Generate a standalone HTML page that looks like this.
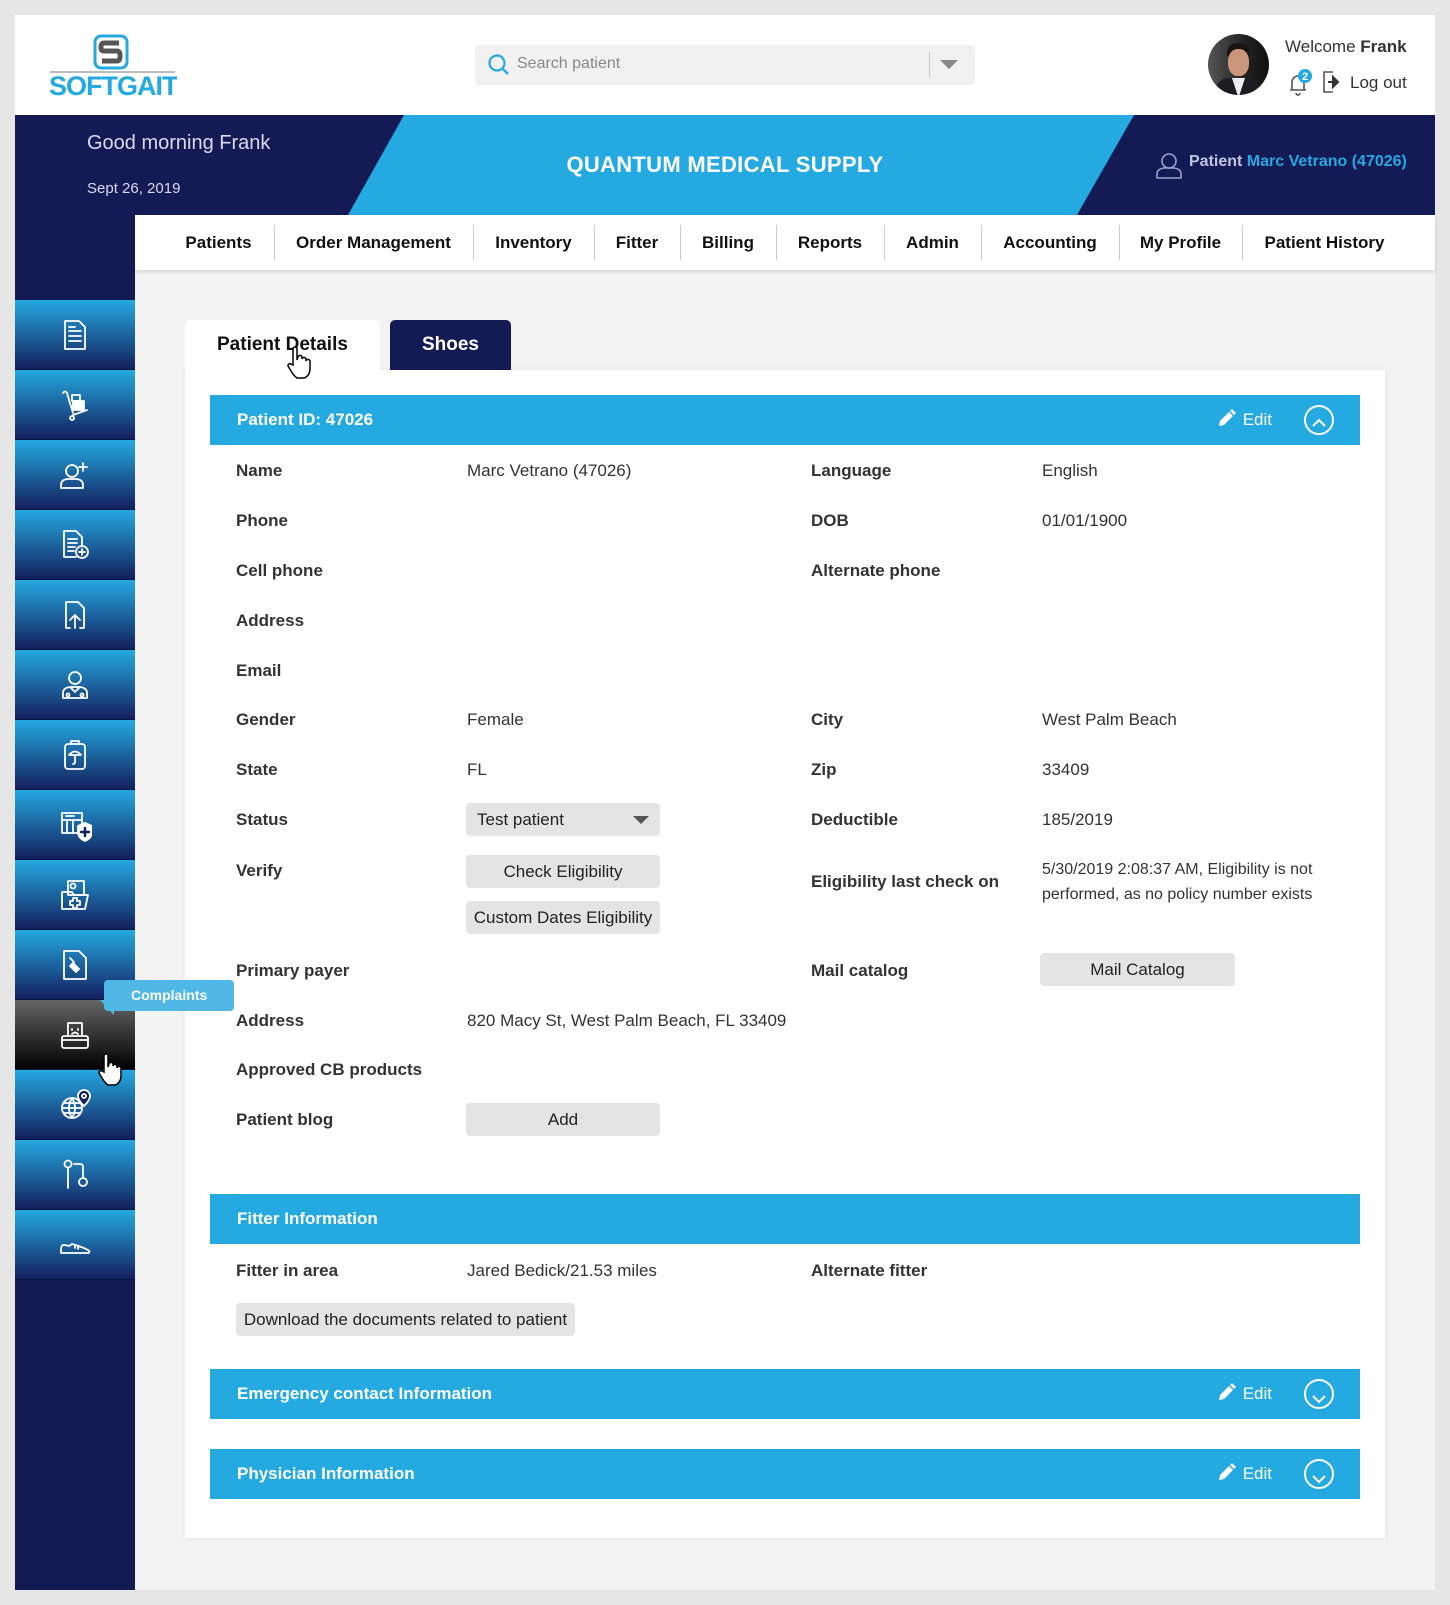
<!DOCTYPE html>
<html><head><meta charset="utf-8"><style>
*{box-sizing:border-box;margin:0;padding:0}
body{width:1450px;height:1605px;background:#e6e6e6;font-family:"Liberation Sans",Arial,sans-serif;position:relative;overflow:hidden;color:#333}
.abs{position:absolute}
#frame{left:15px;top:15px;width:1420px;height:1575px;background:#f3f3f3}
#hdr{left:15px;top:15px;width:1420px;height:100px;background:#fff}
#banner{left:15px;top:115px;width:1420px;height:100px;background:#131a54;overflow:hidden}
#nav{left:135px;top:215px;width:1300px;height:55px;background:#fff;box-shadow:0 2px 4px rgba(0,0,0,.12)}
.nv{position:absolute;top:0;height:55px;line-height:55px;font-weight:bold;font-size:17px;color:#111;text-align:center}
.sep{position:absolute;top:10px;width:1px;height:35px;background:#ccc}
#side{left:15px;top:215px;width:120px;height:1375px;background:#131a54}
.si{position:absolute;left:0;width:120px;height:70px;background:linear-gradient(#25a9e0,#14205e);border-bottom:1px solid #0d1440;display:flex;align-items:center;justify-content:center}
.si svg{width:34px;height:34px;fill:none;stroke:#fff;stroke-width:1.8;stroke-linecap:round;stroke-linejoin:round}
#card{left:185px;top:370px;width:1200px;height:1168px;background:#fff;box-shadow:0 0 6px rgba(0,0,0,.06)}
.bar{position:absolute;left:210px;width:1150px;height:50px;background:#24a9e1;color:#fff;font-weight:bold;font-size:17px;line-height:50px;padding-left:27px}
.lb{position:absolute;font-weight:bold;font-size:17px;color:#333;transform:translateY(-50%)}
.vl{position:absolute;font-size:17px;color:#333;transform:translateY(-50%)}
.btn{position:absolute;background:#e4e4e4;border-radius:4px;font-size:17px;color:#222;text-align:center}
.edit{position:absolute;right:88px;top:0;font-weight:normal;font-size:17px}
.circ{position:absolute;right:26px;top:10px;width:30px;height:30px;border:2px solid #fff;border-radius:50%}
</style></head><body>
<div class="abs" id="frame"></div>
<div class="abs" id="hdr"></div>
<!-- logo -->
<svg class="abs" style="left:49px;top:34px" width="128" height="62" viewBox="0 0 128 62">
<rect x="46" y="2" width="32" height="32" rx="6" fill="none" stroke="#24a9e1" stroke-width="3"/>
<path d="M70 9H55q-3 0-3 4v1q0 3 3 3h13q3 0 3 4v2q0 4-3 4H53" fill="none" stroke="#555" stroke-width="5"/>
<line x1="1" y1="38" x2="126" y2="38" stroke="#777" stroke-width="1"/>
<text x="0" y="61" font-family="Liberation Sans" font-weight="bold" font-size="27" fill="#24a9e1" letter-spacing="-1">S<tspan fill="#24a9e1">O</tspan>FTGAIT</text>
</svg>
<!-- search -->
<div class="abs" style="left:475px;top:45px;width:500px;height:40px;background:#f1f1f1;border-radius:4px"></div>
<svg class="abs" style="left:488px;top:54px" width="22" height="22" viewBox="0 0 22 22"><circle cx="9" cy="9" r="7.5" fill="none" stroke="#24a9e1" stroke-width="2.2"/><line x1="14.5" y1="14.5" x2="20" y2="20" stroke="#24a9e1" stroke-width="2.5"/></svg>
<div class="abs" style="left:517px;top:55px;font-size:16px;color:#888">Search patient</div>
<div class="abs" style="left:929px;top:52px;width:1px;height:26px;background:#ccc"></div>
<div class="abs" style="left:940px;top:60px;border-left:9px solid transparent;border-right:9px solid transparent;border-top:9px solid #888"></div>
<!-- avatar -->
<div class="abs" style="left:1208px;top:34px;width:61px;height:61px;border-radius:50%;overflow:hidden;background:linear-gradient(90deg,#555,#222 60%,#111)">
<div class="abs" style="left:19px;top:9px;width:23px;height:14px;border-radius:10px 10px 3px 3px;background:#1a1410"></div>
<div class="abs" style="left:20px;top:15px;width:21px;height:27px;border-radius:45%;background:#c9967c"></div>
<div class="abs" style="left:8px;top:44px;width:45px;height:25px;border-radius:12px 12px 0 0;background:#1c1c22"></div>
<div class="abs" style="left:24px;top:44px;width:13px;height:20px;background:#eee;clip-path:polygon(0 0,100% 0,50% 100%)"></div>
</div>
<div class="abs" style="left:1285px;top:37px;font-size:17px;color:#333">Welcome <b>Frank</b></div>
<svg class="abs" style="left:1284px;top:68px" width="30" height="30" viewBox="0 0 30 30"><path d="M6 22h16M8 22V14a6 6 0 0 1 12 0v8M12 25a2 2 0 0 0 4 0" fill="none" stroke="#555" stroke-width="1.6"/><circle cx="21" cy="8" r="7" fill="#24a9e1"/><text x="21" y="12" fill="#fff" font-size="11" font-weight="bold" text-anchor="middle" font-family="Liberation Sans">2</text></svg>
<svg class="abs" style="left:1323px;top:71px" width="20" height="22" viewBox="0 0 20 22"><path d="M10 1H1v20h9" fill="none" stroke="#555" stroke-width="1.6"/><path d="M5 11h8M10 6l5 5-5 5z" fill="#333" stroke="#333" stroke-width="2"/></svg>
<div class="abs" style="left:1350px;top:73px;font-size:17px;color:#333">Log out</div>
<!-- banner -->
<div class="abs" id="banner">
<div class="abs" style="left:0;top:0;width:1420px;height:100px;background:#24a9e1;clip-path:polygon(389px 0,1119px 0,1062px 100px,333px 100px)"></div>
<div class="abs" style="left:72px;top:17px;color:#d8dcf0;font-size:20px">Good morning Frank</div>
<div class="abs" style="left:72px;top:65px;color:#d8dcf0;font-size:15px">Sept 26, 2019</div>
<div class="abs" style="left:340px;top:37px;width:740px;text-align:center;color:#fff;font-weight:bold;font-size:22px;letter-spacing:.3px">QUANTUM MEDICAL SUPPLY</div>
<svg class="abs" style="left:1140px;top:36px" width="28" height="28" viewBox="0 0 28 28"><circle cx="14" cy="10" r="7" fill="none" stroke="#9aa3c8" stroke-width="1.6"/><path d="M2 27v-4q0-5 7-6h10q7 1 7 6v4z" fill="none" stroke="#9aa3c8" stroke-width="1.6"/></svg>
<div class="abs" style="left:1174px;top:38px;font-weight:bold;font-size:16px;color:#c0c6e0">Patient <span style="color:#24a9e1">Marc Vetrano (47026)</span></div>
</div>
<!-- nav -->
<div class="abs" id="nav">
<div class="nv" style="left:28px;width:111px">Patients</div><div class="sep" style="left:139px"></div>
<div class="nv" style="left:139px;width:199px">Order Management</div><div class="sep" style="left:338px"></div>
<div class="nv" style="left:338px;width:121px">Inventory</div><div class="sep" style="left:459px"></div>
<div class="nv" style="left:459px;width:86px">Fitter</div><div class="sep" style="left:545px"></div>
<div class="nv" style="left:545px;width:96px">Billing</div><div class="sep" style="left:641px"></div>
<div class="nv" style="left:641px;width:108px">Reports</div><div class="sep" style="left:749px"></div>
<div class="nv" style="left:749px;width:97px">Admin</div><div class="sep" style="left:846px"></div>
<div class="nv" style="left:846px;width:138px">Accounting</div><div class="sep" style="left:984px"></div>
<div class="nv" style="left:984px;width:123px">My Profile</div><div class="sep" style="left:1107px"></div>
<div class="nv" style="left:1107px;width:165px">Patient History</div>
</div>
<!-- sidebar -->
<div class="abs" id="side">
<div class="si" style="top:85px"><svg viewBox="0 0 34 34"><path d="M7 3h14l6 6v22H7z M11 13h12M11 18h12M11 23h12M11 9h6"/></svg></div>
<div class="si" style="top:155px"><svg viewBox="0 0 34 34"><path d="M5 5q2-3 4 0l6 20M14 28a2 2 0 1 0 .1 0M15 27l14-5"/><rect x="15" y="13" width="11" height="9" fill="#fff"/><rect x="14" y="7" width="8" height="6"/></svg></div>
<div class="si" style="top:225px"><svg viewBox="0 0 34 34"><circle cx="14" cy="13" r="6"/><path d="M3 30v-3q0-5 6-6h10q6 1 6 6v3zM25 5v8M21 9h8"/></svg></div>
<div class="si" style="top:295px"><svg viewBox="0 0 34 34"><path d="M6 3h12l6 6v8M6 3v26h12M10 11h9M10 15h9M10 19h7M10 23h6"/><circle cx="24" cy="24" r="6"/><path d="M24 21v6M21 24h6"/></svg></div>
<div class="si" style="top:365px"><svg viewBox="0 0 34 34"><path d="M12 30H8V4h12l6 6v20h-4M17 30V17M12 22l5-5 5 5"/></svg></div>
<div class="si" style="top:435px"><svg viewBox="0 0 34 34"><circle cx="17" cy="10" r="6"/><path d="M5 30v-5q0-5 7-6h10q7 1 7 6v5zM12 19l5 5 5-5"/><circle cx="10" cy="27" r="1.5"/><circle cx="24" cy="27" r="1.5"/></svg></div>
<div class="si" style="top:505px"><svg viewBox="0 0 34 34"><rect x="7" y="6" width="20" height="25" rx="3"/><path d="M13 6V3h8v3M11 17q6-7 12 0zM17 17v7q0 2-2 2"/></svg></div>
<div class="si" style="top:575px"><svg viewBox="0 0 34 34"><rect x="4" y="5" width="20" height="20"/><path d="M4 12h20M9 12v13M15 12v13M8 8h8"/><path d="M20 18l7-3 7 3v6q0 6-7 9-7-3-7-9z" fill="#fff"/><path d="M27 20v8M23 24h8" stroke="#14205e" stroke-width="2.5"/></svg></div>
<div class="si" style="top:645px"><svg viewBox="0 0 34 34"><rect x="10" y="3" width="16" height="14"/><circle cx="15" cy="8" r="2.5"/><path d="M4 14h10l2 3h14l-3 14H4zM15 20h4v3h3v4h-3v3h-4v-3h-3v-4h3z"/></svg></div>
<div class="si" style="top:715px"><svg viewBox="0 0 34 34"><path d="M6 3h15l7 7v21H6z"/><path d="M12 10l4 4M15 15l6 6-3 3-6-6z" fill="#fff"/></svg></div>
<div class="si" style="top:785px;background:linear-gradient(#666,#000)"><svg viewBox="0 0 34 34"><rect x="4" y="18" width="26" height="12" rx="2"/><path d="M4 22h26M10 18V5h14v13M14 11v1M20 11v1M14 16q3-3 6 0"/></svg></div>
<div class="si" style="top:855px"><svg viewBox="0 0 34 34"><circle cx="14" cy="20" r="10"/><path d="M4 20h20M14 10q-6 10 0 20q6-10 0-20M6 15h16M6 25h16"/><path d="M26 18q-6-6-6-10a6 6 0 0 1 12 0q0 4-6 10z" fill="#14205e"/><circle cx="26" cy="8" r="2"/></svg></div>
<div class="si" style="top:925px"><svg viewBox="0 0 34 34"><circle cx="10" cy="6" r="3.5"/><path d="M10 10v20M16 6h6q3 0 3 3v10"/><circle cx="25" cy="24" r="4"/></svg></div>
<div class="si" style="top:995px"><svg viewBox="0 0 34 34"><path d="M3 22q0-6 4-5l4 1 3-2q8 2 16 6 2 1 1 3H3zM3 25h28M17 17v3M20 18v3"/></svg></div>
</div>
<!-- card & tabs -->
<div class="abs" id="card"></div>
<!-- tooltip -->
<div class="abs" style="left:104px;top:980px;width:130px;height:31px;background:#4fb8e6;border-radius:4px;color:#fff;font-weight:bold;font-size:14px;line-height:31px;padding-left:27px">Complaints</div>
<div class="abs" style="left:100px;top:1000px;border-right:14px solid #4fb8e6;border-bottom:15px solid transparent"></div>
<!-- hand cursor -->
<svg class="abs" style="left:96px;top:1052px" width="28" height="34" viewBox="0 0 28 34"><path d="M8 20V4a2 2 0 0 1 4 0v11l1-3a2 2 0 0 1 4 1v1a2 2 0 0 1 4 1v1a2 2 0 0 1 4 1v6q0 8-6 10h-7q-3-2-6-7l-3-5a2 2 0 0 1 3-2z" fill="#fff" stroke="#000" stroke-width="1.5"/></svg>
<div class="abs" style="left:185px;top:320px;width:195px;height:55px;background:#fff;border-radius:5px 5px 0 0"></div>
<div class="abs" style="left:217px;top:334px;font-weight:bold;font-size:19px;color:#111">Patient Details</div>
<svg class="abs" style="left:285px;top:345px" width="28" height="34" viewBox="0 0 28 34"><path d="M8 20V4a2 2 0 0 1 4 0v11l1-3a2 2 0 0 1 4 1v1a2 2 0 0 1 4 1v1a2 2 0 0 1 4 1v6q0 8-6 10h-7q-3-2-6-7l-3-5a2 2 0 0 1 3-2z" fill="#fff" stroke="#000" stroke-width="1.5"/></svg>
<div class="abs" style="left:390px;top:320px;width:121px;height:50px;background:#131a54;border-radius:5px 5px 0 0;color:#fff;font-weight:bold;font-size:19px;text-align:center;line-height:50px">Shoes</div>

<div class="bar" style="top:395px">Patient ID: 47026
<span class="edit"><svg width="20" height="20" viewBox="0 0 20 20" style="vertical-align:-3px;margin-right:6px"><path d="M2 18l1-5 9-9 4 4-9 9zM13 3l2-2 4 4-2 2z" fill="#fff"/></svg>Edit</span>
<div class="circ"><svg width="26" height="26" viewBox="0 0 26 26"><path d="M7 15l6-6 6 6" fill="none" stroke="#fff" stroke-width="2"/></svg></div></div>

<div class="lb" style="left:236px;top:471px">Name</div><div class="vl" style="left:467px;top:471px">Marc Vetrano (47026)</div>
<div class="lb" style="left:811px;top:471px">Language</div><div class="vl" style="left:1042px;top:471px">English</div>
<div class="lb" style="left:236px;top:521px">Phone</div>
<div class="lb" style="left:811px;top:521px">DOB</div><div class="vl" style="left:1042px;top:521px">01/01/1900</div>
<div class="lb" style="left:236px;top:571px">Cell phone</div>
<div class="lb" style="left:811px;top:571px">Alternate phone</div>
<div class="lb" style="left:236px;top:621px">Address</div>
<div class="lb" style="left:236px;top:671px">Email</div>
<div class="lb" style="left:236px;top:720px">Gender</div><div class="vl" style="left:467px;top:720px">Female</div>
<div class="lb" style="left:811px;top:720px">City</div><div class="vl" style="left:1042px;top:720px">West Palm Beach</div>
<div class="lb" style="left:236px;top:770px">State</div><div class="vl" style="left:467px;top:770px">FL</div>
<div class="lb" style="left:811px;top:770px">Zip</div><div class="vl" style="left:1042px;top:770px">33409</div>
<div class="lb" style="left:236px;top:820px">Status</div>
<div class="btn" style="left:466px;top:803px;width:194px;height:33px;text-align:left;padding-left:11px;line-height:33px">Test patient<span style="position:absolute;right:11px;top:13px;border-left:8px solid transparent;border-right:8px solid transparent;border-top:8px solid #555"></span></div>
<div class="lb" style="left:811px;top:820px">Deductible</div><div class="vl" style="left:1042px;top:820px">185/2019</div>
<div class="lb" style="left:236px;top:871px">Verify</div>
<div class="btn" style="left:466px;top:855px;width:194px;height:33px;line-height:33px">Check Eligibility</div>
<div class="btn" style="left:466px;top:901px;width:194px;height:33px;line-height:33px">Custom Dates Eligibility</div>
<div class="lb" style="left:811px;top:882px">Eligibility last check on</div>
<div class="vl" style="left:1042px;top:882px;font-size:16px;line-height:25px">5/30/2019 2:08:37 AM, Eligibility is not<br>performed, as no policy number exists</div>
<div class="lb" style="left:236px;top:971px">Primary payer</div>
<div class="lb" style="left:811px;top:971px">Mail catalog</div>
<div class="btn" style="left:1040px;top:953px;width:195px;height:33px;line-height:33px">Mail Catalog</div>
<div class="lb" style="left:236px;top:1021px">Address</div><div class="vl" style="left:467px;top:1021px">820 Macy St, West Palm Beach, FL 33409</div>
<div class="lb" style="left:236px;top:1070px">Approved CB products</div>
<div class="lb" style="left:236px;top:1120px">Patient blog</div>
<div class="btn" style="left:466px;top:1103px;width:194px;height:33px;line-height:33px">Add</div>

<div class="bar" style="top:1194px">Fitter Information</div>
<div class="lb" style="left:236px;top:1271px">Fitter in area</div><div class="vl" style="left:467px;top:1271px">Jared Bedick/21.53 miles</div>
<div class="lb" style="left:811px;top:1271px">Alternate fitter</div>
<div class="btn" style="left:236px;top:1303px;width:339px;height:33px;line-height:33px">Download the documents related to patient</div>

<div class="bar" style="top:1369px">Emergency contact Information
<span class="edit"><svg width="20" height="20" viewBox="0 0 20 20" style="vertical-align:-3px;margin-right:6px"><path d="M2 18l1-5 9-9 4 4-9 9zM13 3l2-2 4 4-2 2z" fill="#fff"/></svg>Edit</span>
<div class="circ"><svg width="26" height="26" viewBox="0 0 26 26"><path d="M7 11l6 6 6-6" fill="none" stroke="#fff" stroke-width="2"/></svg></div></div>
<div class="bar" style="top:1449px">Physician Information
<span class="edit"><svg width="20" height="20" viewBox="0 0 20 20" style="vertical-align:-3px;margin-right:6px"><path d="M2 18l1-5 9-9 4 4-9 9zM13 3l2-2 4 4-2 2z" fill="#fff"/></svg>Edit</span>
<div class="circ"><svg width="26" height="26" viewBox="0 0 26 26"><path d="M7 11l6 6 6-6" fill="none" stroke="#fff" stroke-width="2"/></svg></div></div>
</body></html>
